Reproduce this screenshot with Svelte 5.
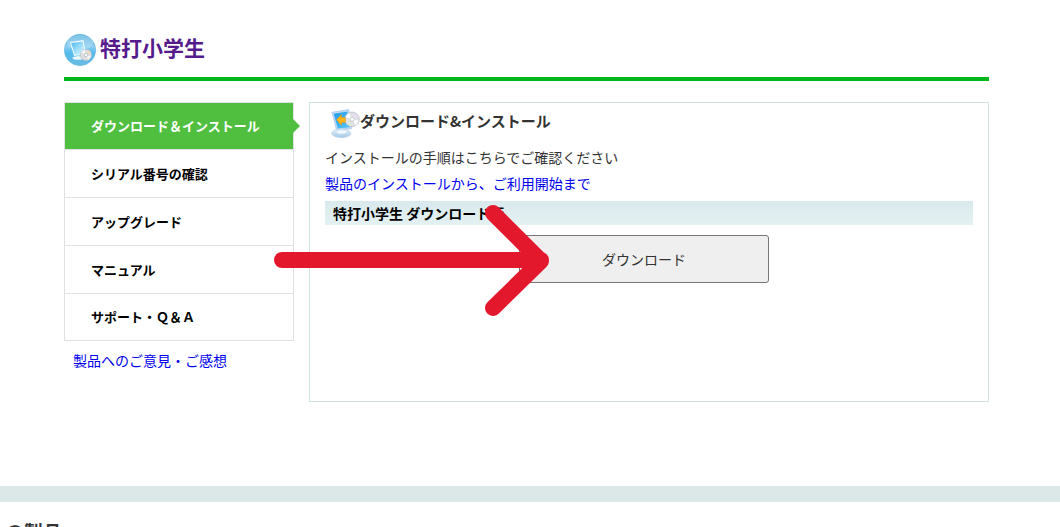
<script>
  const menu = [
    "ダウンロード＆インストール",
    "シリアル番号の確認",
    "アップグレード",
    "マニュアル",
    "サポート・Ｑ＆Ａ",
  ];

  let current = $state(0);

  function select(e, i) {
    e.preventDefault();
    current = i;
  }
</script>

<div class="page">
  <header>
    <svg class="logo" viewBox="0 0 32 32" aria-hidden="true">
      <defs>
        <linearGradient id="ball" x1="0" y1="0" x2="0" y2="1">
          <stop offset="0" stop-color="#58b0de" />
          <stop offset="0.4" stop-color="#8acdf0" />
          <stop offset="0.6" stop-color="#52bbee" />
          <stop offset="1" stop-color="#6bbbe2" />
        </linearGradient>
        <linearGradient id="glass" x1="0" y1="0" x2="1" y2="1">
          <stop offset="0" stop-color="#49b6ee" />
          <stop offset="0.5" stop-color="#9bdcf8" />
          <stop offset="1" stop-color="#e2f6fe" />
        </linearGradient>
      </defs>
      <circle cx="16" cy="16" r="15.7" fill="url(#ball)" stroke="#5aaed6" stroke-width="0.5" />
      <ellipse cx="16" cy="8.5" rx="13" ry="7.5" fill="#fff" opacity="0.22" />
      <path d="M6 8 19.5 6 22 20.5 10 22Z" fill="#f0faff" />
      <path d="M7.2 9 18.6 7.4 20.8 19.4 10.8 20.8Z" fill="url(#glass)" />
      <path d="M12 21.5h6l1 2h-6z" fill="#b8e2f5" />
      <ellipse cx="14" cy="24" rx="5.5" ry="1.8" fill="#eaf8fe" />
      <circle cx="22" cy="21" r="5.7" fill="#dcdde0" stroke="#a5adb5" stroke-width="0.4" />
      <path d="M22 21 17.1 18.5 20.2 15.6ZM22 21 27 22.5 24.2 26Z" fill="#fff" opacity="0.8" />
      <path d="M22 21 24.2 15.8 27.1 18.5Z" fill="#efd9bd" />
      <circle cx="22" cy="21" r="1.7" fill="#f5fbfd" stroke="#98a4ad" stroke-width="0.5" />
    </svg>
    <h1><a href="#top">特打小学生</a></h1>
  </header>

  <div class="columns">
    <div class="side">
      <nav>
        <ul>
          {#each menu as item, i}
            <li class:active={i === current}>
              <a href="#menu{i}" onclick={(e) => select(e, i)}>{item}</a>
            </li>
          {/each}
        </ul>
      </nav>
      <a class="feedback" href="#feedback">製品へのご意見・ご感想</a>
    </div>

    <main>
      <div class="title">
        <svg viewBox="0 0 32 32" aria-hidden="true">
          <defs>
            <linearGradient id="screen" x1="0" y1="0" x2="1" y2="1">
              <stop offset="0" stop-color="#1c9cec" />
              <stop offset="1" stop-color="#5cc6fa" />
            </linearGradient>
            <linearGradient id="foot" x1="0" y1="0" x2="0" y2="1">
              <stop offset="0" stop-color="#e6f2fc" />
              <stop offset="1" stop-color="#a3c9e8" />
            </linearGradient>
          </defs>
          <path d="M2 4 20 1 23 21.5 7 23Z" fill="#c3daf5" stroke="#9bbbe2" stroke-width="0.6" />
          <path d="M4 5.6 18.6 3.2 21.2 20 8.2 21.2Z" fill="url(#screen)" />
          <path d="M11 22h6l2 4h-9z" fill="#86b4dc" />
          <ellipse cx="12" cy="26.4" rx="10.2" ry="4.6" fill="url(#foot)" stroke="#a9c6e3" stroke-width="0.6" />
          <ellipse cx="12.5" cy="25" rx="5" ry="1.6" fill="#f4faff" />
          <circle cx="23.5" cy="11.5" r="7.8" fill="#dfe1e5" stroke="#aab0b8" stroke-width="0.6" />
          <path d="M23.5 11.5 16.5 9 20 4.6ZM23.5 11.5 30.6 13 27.4 18Z" fill="#fff" />
          <path d="M23.5 11.5 26 4.3 30 8Z" fill="#e9dff0" />
          <path d="M23.5 11.5 18 17 21.8 19Z" fill="#dcebd8" />
          <path d="M7 12 12.3 6.3v3.3h4v5.2h-4V18Z" fill="#ffb516" stroke="#e99b08" stroke-width="0.5" />
          <circle cx="23.5" cy="11.5" r="2.2" fill="#fff" stroke="#a6abb4" stroke-width="0.6" />
        </svg>
        <h2>ダウンロード&amp;インストール</h2>
      </div>
      <p>インストールの手順はこちらでご確認ください</p>
      <p><a href="#guide">製品のインストールから、ご利用開始まで</a></p>
      <h3>特打小学生 ダウンロード版</h3>
      <div class="download">
        <div class="target">
          <button type="button">ダウンロード</button>
          <svg class="arrow" viewBox="0 0 276 114" aria-hidden="true">
            <path d="M8 57H267M219 10 267 58 219 105" />
          </svg>
        </div>
      </div>
    </main>
  </div>
</div>

<footer>
  <h2>の製品</h2>
</footer>

<style>
:global(body) {
  margin: 0;
  overflow: hidden;
  background: #fff;
  color: #333;
  font-family: "Noto Sans CJK JP", sans-serif;
  font-size: 14px;
}

h1,
h2,
h3,
p,
ul {
  margin: 0;
  padding: 0;
}

a {
  color: #00e;
  text-decoration: none;
}

.page {
  padding: 34px 71px 0 64px;
}

header {
  display: flex;
  gap: 4px;
  height: 43px;
  border-bottom: 4px solid #00b71a;
}

.logo {
  width: 32px;
  height: 32px;
}

h1 {
  font-size: 21px;
  line-height: 26px;
}

h1 a {
  color: #551a8b;
}

.columns {
  display: flex;
  align-items: flex-start;
  gap: 15px;
  margin-top: 21px;
}

.side {
  flex: 0 0 230px;
}

ul {
  list-style: none;
  border: 1px solid #dfe2e5;
}

li {
  position: relative;
  border-bottom: 1px solid #dfe2e5;
}

li:last-child {
  border-bottom: 0;
}

li a {
  display: block;
  padding-left: 26px;
  color: #000;
  font-size: 13px;
  font-weight: bold;
  line-height: 47px;
}

li:first-child a,
li:last-child a {
  line-height: 46px;
}

li.active a {
  background: #50bf40;
  color: #fff;
}

li.active::after {
  content: "";
  position: absolute;
  top: 50%;
  left: 100%;
  margin-top: -7px;
  border: 7px solid transparent;
  border-left-color: #50bf40;
  border-right: 0;
}

.feedback {
  display: block;
  margin: 7px 0 0 9px;
  line-height: 24px;
}

main {
  flex: 1;
  box-sizing: border-box;
  min-height: 300px;
  padding: 5px 15px;
  border: 1px solid #d0e3e3;
}

.title {
  display: flex;
  height: 36px;
  padding-left: 5px;
}

.title svg {
  width: 30px;
  height: 31px;
}

.title h2 {
  font-size: 15px;
  line-height: 26px;
}

p {
  line-height: 26px;
}

h3 {
  margin-top: 5px;
  padding-left: 8px;
  background: linear-gradient(#d9e9ed, #e4f1f2);
  color: #000;
  font-size: 14px;
  line-height: 24px;
}

.download {
  display: flex;
  justify-content: center;
  padding: 10px 10px 0 0;
}

.target {
  position: relative;
}

button {
  display: block;
  width: 250px;
  height: 48px;
  border: 1px solid #767676;
  border-radius: 3px;
  background: #efefef;
  color: #333;
  font: inherit;
  cursor: pointer;
}

/* pointer drawn over the menu and the button */
.arrow {
  position: absolute;
  top: -32px;
  right: 219px;
  width: 276px;
  height: 114px;
  pointer-events: none;
}

.arrow path {
  fill: none;
  stroke: #e4182c;
  stroke-width: 16px;
  stroke-linecap: round;
  stroke-linejoin: round;
}

footer {
  margin-top: 84px;
  padding: 16px 5px 0;
  border-top: 16px solid #dce8e8;
}

footer h2 {
  font-size: 19px;
  line-height: 28px;
}
</style>
